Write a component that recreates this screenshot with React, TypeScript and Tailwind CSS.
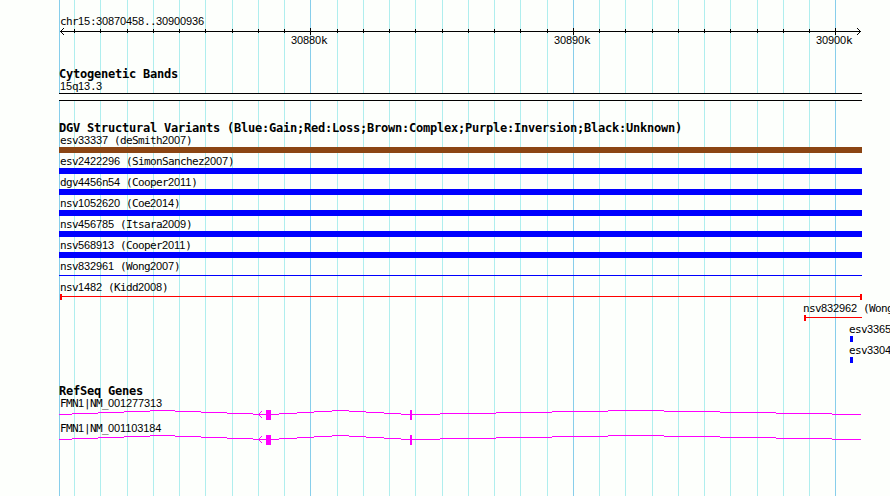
import React from 'react';

const MINOR = [74, 100, 127, 153, 179, 205, 232, 258, 284, 337, 363, 389, 415, 442, 468, 494, 520, 547, 599, 625, 652, 678, 704, 730, 757, 783, 809];
const MAJOR = [310, 573, 835];

// Digits use a plain sans face so that zeros carry no dot; both runs advance 6px.
function Label({ text, className = '' }: { text: string; className?: string }) {
  return (
    <div className={`h-[13px] whitespace-pre font-['DejaVu_Sans_Mono',monospace] text-[11px] leading-[13px] tracking-[-0.622px] text-black ${className}`}>
      {text.split(/(\d+)/).map((part, i) =>
        /^\d/.test(part) ? (
          <span key={i} className="font-['Liberation_Sans',sans-serif] leading-[0] tracking-[-0.117px]">{part}</span>
        ) : (
          part
        ),
      )}
    </div>
  );
}

function Heading({ text }: { text: string }) {
  return (
    <h2 className="h-3 whitespace-pre pl-[59px] font-['DejaVu_Sans_Mono',monospace] text-[12px] font-bold leading-[12px] tracking-[-0.224px] text-black">
      {text}
    </h2>
  );
}

function Grid() {
  return (
    <svg className="absolute left-0 top-0" width="890" height="496" shapeRendering="crispEdges">
      {MINOR.map((x) => <rect key={x} x={x} y="0" width="1" height="496" fill="#afeeee" />)}
      {[59, ...MAJOR].map((x) => <rect key={x} x={x} y="0" width="1" height="496" fill="#87ceeb" />)}
    </svg>
  );
}

function Axis() {
  return (
    <svg className="block" width="890" height="7" shapeRendering="crispEdges">
      <rect x="60" y="3" width="801" height="1" />
      {MINOR.map((x) => <rect key={x} x={x} y="1" width="1" height="4" />)}
      {MAJOR.map((x) => <rect key={x} x={x} y="0" width="1" height="7" />)}
      {[1, 2, 3].map((d) => (
        <g key={d}>
          <rect x={60 + d} y={3 - d} width="1" height="1" />
          <rect x={60 + d} y={3 + d} width="1" height="1" />
          <rect x={860 - d} y={3 - d} width="1" height="1" />
          <rect x={860 - d} y={3 + d} width="1" height="1" />
        </g>
      ))}
    </svg>
  );
}

const VARIANTS: [string, string][] = [
  ['esv33337 (deSmith2007)', 'bg-[#8b4513]'],
  ['esv2422296 (SimonSanchez2007)', 'bg-[#0000ff]'],
  ['dgv4456n54 (Cooper2011)', 'bg-[#0000ff]'],
  ['nsv1052620 (Coe2014)', 'bg-[#0000ff]'],
  ['nsv456785 (Itsara2009)', 'bg-[#0000ff]'],
  ['nsv568913 (Cooper2011)', 'bg-[#0000ff]'],
];

// Each intron segment is [start x, row].
const INTRONS: [number, number][] = [
  [59, 4], [72, 3], [98, 2], [124, 1], [150, 0], [175, 1], [201, 2], [227, 3], [253, 4],
  [279, 3], [297, 2], [314, 1], [332, 0], [349, 1], [366, 2], [384, 3], [401, 4],
  [440, 3], [496, 2], [552, 1], [608, 0], [664, 1], [720, 2], [776, 3], [832, 4], [861, 4],
];

function Gene({ name }: { name: string }) {
  return (
    <div className="h-[25px]">
      <Label text={name} className="pl-[60px]" />
      <svg className="block" width="890" height="10" shapeRendering="crispEdges" fill="#ff00ff">
        {INTRONS.slice(0, -1).map(([x, y], i) => (
          <rect key={x} x={x} y={y} width={INTRONS[i + 1][0] - x} height="1" />
        ))}
        <rect x="266" y="0" width="5" height="10" />
        <rect x="410" y="0" width="2" height="10" />
        {[1, 2, 3].map((d) => (
          <g key={d}>
            <rect x={258 + d} y={4 - d} width="1" height="1" />
            <rect x={258 + d} y={4 + d} width="1" height="1" />
          </g>
        ))}
      </svg>
    </div>
  );
}

export default function App() {
  return (
    <main className="relative h-[496px] w-[890px] overflow-hidden bg-[#fdfffc]">
      <Grid />
      <div className="relative flex flex-col pt-[15px]">
        <Label text="chr15:30870458..30900936" className="pl-[60px]" />
        <Axis />
        <div className="-mt-px flex h-[13px] pl-[291px]">
          <Label text="30880k" className="w-[263px]" />
          <Label text="30890k" className="w-[262px]" />
          <Label text="30900k" />
        </div>
        <div className="mt-[21px]">
          <Heading text="Cytogenetic Bands" />
          <Label text="15q13.3" className="pl-[60px]" />
          <div className="ml-[59px] h-2 w-[803px] border-y border-black bg-[#fdfffc]" />
        </div>
        <div className="mt-[21px]">
          <Heading text="DGV Structural Variants (Blue:Gain;Red:Loss;Brown:Complex;Purple:Inversion;Black:Unknown)" />
          {VARIANTS.map(([name, color]) => (
            <div key={name} className="h-[21px]">
              <Label text={name} className="pl-[60px]" />
              <div className={`ml-[59px] h-1.5 w-[803px] ${color}`} />
            </div>
          ))}
          <div className="h-[21px]">
            <Label text="nsv832961 (Wong2007)" className="pl-[60px]" />
            <div className="ml-[59px] mt-[2px] h-px w-[803px] bg-[#0000ff]" />
          </div>
          <div className="h-[21px]">
            <Label text="nsv1482 (Kidd2008)" className="pl-[60px]" />
            <div className="ml-[60px] flex h-1.5 w-[802px] border-x-2 border-[#ff0000] pt-[2px]">
              <div className="h-px w-full bg-[#ff0000]" />
            </div>
          </div>
          <div className="h-[21px] pl-[804px]">
            <Label text="nsv832962 (Wong" className="-ml-px" />
            <div className="h-1.5 w-[58px] border-l-2 border-[#ff0000] pt-[2px]">
              <div className="h-px bg-[#ff0000]" />
            </div>
          </div>
          {['esv3365', 'esv3304'].map((name) => (
            <div key={name} className="h-[21px] pl-[850px]">
              <Label text={name} className="-ml-px" />
              <div className="h-1.5 w-[3px] bg-[#0000ff]" />
            </div>
          ))}
        </div>
        <div className="mt-5">
          <Heading text="RefSeq Genes" />
          <Gene name="FMN1|NM_001277313" />
          <Gene name="FMN1|NM_001103184" />
        </div>
      </div>
    </main>
  );
}
